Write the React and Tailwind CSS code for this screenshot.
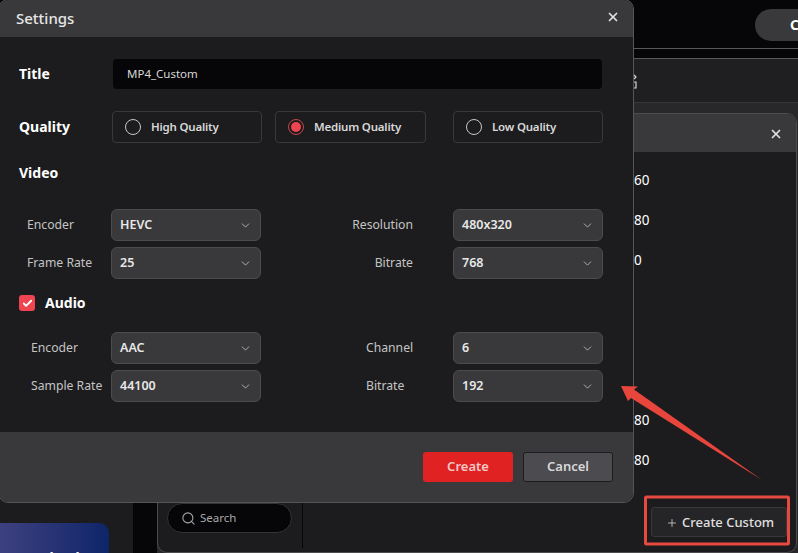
import React from 'react';
import { ChevronDown, Search, X, Check, Plus } from 'lucide-react';

const Select = ({ value }) => (
  <div className="w-[150px] h-8 shrink-0 rounded-md bg-[#39393b] border border-[#4c4c4f] flex items-center justify-between pl-2 pr-[8px] text-[12.5px] font-semibold text-[#e8e8e8]">
    <span>{value}</span>
    <ChevronDown className="w-[13px] h-[13px] text-[#c8c8c8]" strokeWidth={1.5} />
  </div>
);

const FieldRow = ({ left, leftValue, right, rightValue, leftClass, rightClass }) => (
  <div className="flex items-center h-8">
    <div className={`text-[12.2px] text-[#c4c4c4] shrink-0 ${leftClass}`}>{left}</div>
    <Select value={leftValue} />
    <div className={`text-[12.2px] text-[#c4c4c4] shrink-0 ${rightClass}`}>{right}</div>
    <Select value={rightValue} />
  </div>
);

const Radio = ({ label, checked, className }) => (
  <div className={`h-8 rounded-[4px] border border-[#38383b] flex items-center gap-[10px] pl-3 ${className}`}>
    {checked ? (
      <span className="w-4 h-4 rounded-full border border-[#c9444c] flex items-center justify-center">
        <span className="w-[10px] h-[10px] rounded-full bg-[#ef4550]" />
      </span>
    ) : (
      <span className="w-4 h-4 rounded-full border border-[#c8c8c8]" />
    )}
    <span className="text-[11.5px] tracking-[-0.2px] font-semibold text-[#d8d8d8]">{label}</span>
  </div>
);

const SettingsDialog = () => (
  <div className="absolute left-[-2px] top-[-1px] w-[636px] h-[504px] rounded-[10px] border border-[#555558] bg-[#1c1c1e] overflow-hidden flex flex-col">
    <div className="h-[37px] shrink-0 bg-[#39393b] flex items-center justify-between pl-[17px] pr-[13px]">
      <span className="text-[15px] font-medium text-[#e6e6e6]">Settings</span>
      <X className="w-[14px] h-[14px] -mt-[3px] text-[#e0e0e0]" strokeWidth={3} />
    </div>

    <div className="flex-1 pl-[20px]">
      <div className="flex items-center mt-[22px] h-[30px]">
        <div className="w-[94px] text-sm font-bold text-white">Title</div>
        <div className="w-[489px] h-[30px] rounded-sm bg-[#060608] flex items-center pl-[14px] text-[11.5px] text-[#d8d8d8]">MP4_Custom</div>
      </div>

      <div className="flex items-center mt-[22px] h-8">
        <div className="w-[93px] text-sm font-bold text-white">Quality</div>
        <Radio label="High Quality" className="w-[150px]" />
        <Radio label="Medium Quality" checked className="w-[151px] ml-[13px]" />
        <Radio label="Low Quality" className="w-[150px] ml-[27px]" />
      </div>

      <div className="mt-[20px] text-sm font-bold text-white leading-5">Video</div>

      <div className="mt-[26px] flex flex-col gap-[6px] pl-[8px]">
        <FieldRow left="Encoder" leftValue="HEVC" right="Resolution" rightValue="480x320" leftClass="w-[84px]" rightClass="w-[192px] pr-[40px] text-right" />
        <FieldRow left="Frame Rate" leftValue="25" right="Bitrate" rightValue="768" leftClass="w-[84px]" rightClass="w-[192px] pr-[40px] text-right" />
      </div>

      <div className="mt-[14px] flex items-center h-[20px] gap-[10px]">
        <span className="w-4 h-4 rounded-[3px] bg-[#ef4550] flex items-center justify-center">
          <Check className="w-[11px] h-[11px] text-white" strokeWidth={4} />
        </span>
        <span className="text-sm font-bold text-white">Audio</span>
      </div>

      <div className="mt-[19px] flex flex-col gap-[6px] pl-[12px]">
        <FieldRow left="Encoder" leftValue="AAC" right="Channel" rightValue="6" leftClass="w-[80px]" rightClass="w-[192px] pl-[105px]" />
        <FieldRow left="Sample Rate" leftValue="44100" right="Bitrate" rightValue="192" leftClass="w-[80px]" rightClass="w-[192px] pl-[105px]" />
      </div>
    </div>

    <div className="h-[70px] shrink-0 bg-[#39393b] flex items-center justify-end gap-[10px] pr-[20px]">
      <button className="w-[90px] h-[30px] rounded-[3px] bg-[#e02222] text-[13px] font-semibold text-[#f0c8c8]">Create</button>
      <button className="w-[90px] h-[30px] rounded-[3px] bg-[#4b4b50] border border-[#1c1c1e] text-[13px] font-semibold text-[#d8d8d8]">Cancel</button>
    </div>
  </div>
);

export default function App() {
  const rows = ['60', '80', '0', '', '', '', '80', '80'];

  return (
    <div className="relative w-[798px] h-[553px] overflow-hidden bg-[#060608] flex flex-col" style={{ fontFamily: '"Noto Sans", sans-serif' }}>
      {/* app behind the dialogs */}
      <div className="h-[48px] shrink-0 flex justify-end pt-[9px]">
        <div className="w-[50px] h-8 -mr-[7px] rounded-l-full bg-[#39393b] text-sm font-bold text-white pl-[35px] leading-8">C</div>
      </div>
      <div className="h-[11px] shrink-0 border-y border-[#59595c]" />
      <div className="h-[44px] shrink-0 bg-[#1f1f21] border-b border-[#36363a] flex items-center pl-[627px]">
        <svg width="12" height="16" viewBox="0 0 12 16" fill="none" stroke="#d8d8d8" strokeWidth="1.2">
          <path d="M7 2 9 4 7 6" />
          <path d="M2 9h7v6H2" />
        </svg>
      </div>

      <div className="flex-1 flex min-h-0">
        <div className="w-[133px] shrink-0 bg-[#1c1c1e] flex flex-col justify-end">
          <div className="w-[109px] h-[30px] rounded-tr-[10px] bg-gradient-to-r from-[#3d4080] to-[#0d2569] overflow-hidden pt-[25px] pl-[30px] text-sm font-bold text-white">Upload</div>
        </div>
        <div className="w-[24px] shrink-0" />
        <div className="flex-1 bg-[#28282a] pt-[10px]">
          <div className="h-[440px] mr-px rounded-[10px] border border-[#4c4c4f] bg-[#1c1c1e] overflow-hidden flex flex-col">
            <div className="h-[38px] shrink-0 bg-[#39393b] flex items-center justify-end pr-[13px]">
              <X className="w-[14px] h-[14px] mt-[2px] text-[#e0e0e0]" strokeWidth={3} />
            </div>
            <div className="flex-1 flex min-h-0">
              <div className="w-[144px] shrink-0 flex flex-col justify-end pl-[9px] pb-[19px]">
                <div className="w-[125px] h-[30px] rounded-full bg-[#060608] border border-[#333336] flex items-center gap-[4px] pl-[13px] text-[11.5px] text-[#a8a8a8]">
                  <Search className="w-[15px] h-[15px]" strokeWidth={1.75} />
                  <span>Search</span>
                </div>
              </div>
              <div className="w-px mb-[4px] bg-[#060608]" />
              <div className="flex-1 flex flex-col justify-between pt-[8px] pb-[15px] pl-[331px]">
                <div>
                  {rows.map((r, i) => (
                    <div key={i} className="h-10 flex items-center text-[13.5px] text-white">{r}</div>
                  ))}
                </div>
                <div className="w-[136px] h-[30px] ml-[17px] rounded-[3px] bg-[#252527] border border-[#38383b] flex items-center pt-px pl-[14px] gap-[4px] text-[13px] font-medium text-[#e0e0e0]">
                  <Plus className="w-[12px] h-[12px]" strokeWidth={1.5} />
                  <span>Create Custom</span>
                </div>
              </div>
            </div>
          </div>
        </div>
      </div>

      <SettingsDialog />

      {/* red annotation */}
      <svg className="absolute inset-0 pointer-events-none" width="798" height="553" viewBox="0 0 798 553">
        <path d="M621 386 638 386.5 634 389.5 762 480 631 398 628 401Z" fill="#e8463c" />
        <rect x="645.5" y="497" width="143" height="47" rx="1" fill="none" stroke="#e5493f" strokeWidth="3" />
      </svg>
    </div>
  );
}
